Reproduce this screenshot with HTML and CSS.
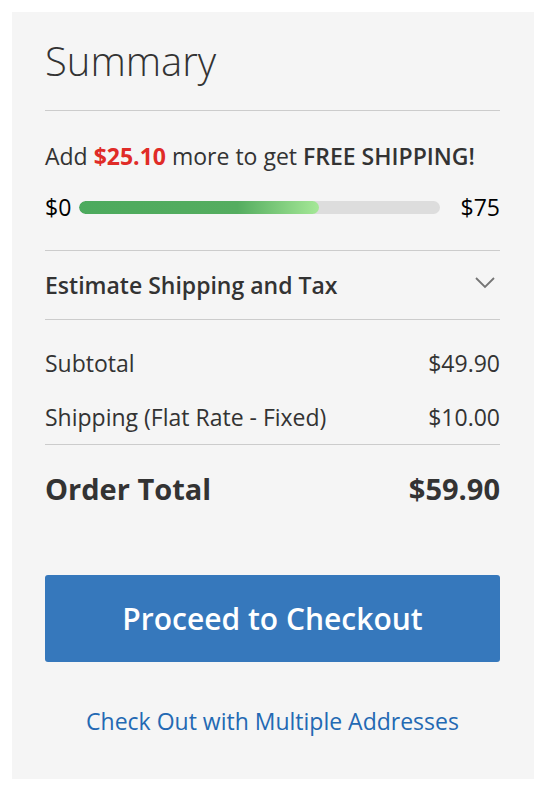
FILE: index.html
```html
<!DOCTYPE html>
<html lang="en">
  <head>
    <meta charset="UTF-8" />
    <meta name="viewport" content="width=device-width, initial-scale=1.0" />
    <title>Cart Summary</title>
    <link rel="stylesheet" href="styles.css">
  </head>
  <body>
    <div class="summary">
      <h2 class="summary-title">Summary</h2>

      <div class="free-shipping">
        <p class="free-shipping-text">
          Add <span class="amount-left">$25.10</span> more to get <strong>FREE SHIPPING!</strong>
        </p>
        <div class="progress-row">
          <span>$0</span>
          <div class="progress-track">
            <div class="progress-fill" style="width: 66.5%"></div>
          </div>
          <span>$75</span>
        </div>
      </div>

      <div class="estimate">
        <span>Estimate Shipping and Tax</span>
        <svg class="chevron" width="20" height="12" viewBox="0 0 20 12">
          <polyline points="1,1 10,10 19,1" fill="none" stroke="#757575" stroke-width="1.8" />
        </svg>
      </div>

      <div class="totals">
        <div class="totals-row">
          <span>Subtotal</span>
          <span>$49.90</span>
        </div>
        <div class="totals-row">
          <span>Shipping (Flat Rate - Fixed)</span>
          <span>$10.00</span>
        </div>
      </div>

      <div class="grand-total">
        <span>Order Total</span>
        <span>$59.90</span>
      </div>

      <button class="checkout-btn" type="button">Proceed to Checkout</button>

      <a class="multi-link" href="#">Check Out with Multiple Addresses</a>
    </div>
  </body>
</html>
```

FILE: styles.css
```css
body {
  margin: 0;
  padding: 12px;
  background-color: #ffffff;
  font-family: "Open Sans", "Liberation Sans", sans-serif;
  color: #333333;
}
.summary {
  width: 522px;
  box-sizing: border-box;
  background-color: #f5f5f5;
  padding: 20px 34px 43px 33px;
}
.summary-title {
  margin: 0;
  font-size: 40px;
  font-weight: 300;
  line-height: 57px;
  padding-bottom: 21px;
  border-bottom: 1px solid #cccccc;
}
.free-shipping {
  padding: 31px 0 29px;
  border-bottom: 1px solid #cccccc;
  font-size: 23px;
}
.free-shipping-text {
  margin: 0 0 23px;
  line-height: 28px;
}
.amount-left {
  color: #e02b27;
  font-weight: 700;
}
.free-shipping-text strong {
  font-weight: 600;
}
.progress-row {
  display: flex;
  align-items: center;
  line-height: 28px;
  color: #000000;
}
.progress-track {
  flex: 1;
  height: 13px;
  margin: 0 21px 0 8px;
  background-color: #dddddd;
  border-radius: 7px;
  overflow: hidden;
}
.progress-fill {
  height: 100%;
  border-radius: 7px;
  background: linear-gradient(to right, #4caa5d 0%, #55ad60 66%, #a5e897 100%);
}
.estimate {
  display: flex;
  align-items: center;
  justify-content: space-between;
  height: 68px;
  border-bottom: 1px solid #cccccc;
  font-size: 23px;
  font-weight: 600;
}
.chevron {
  margin-right: 5px;
  margin-top: -4px;
}
.totals {
  padding: 29px 0 13px;
  border-bottom: 1px solid #cccccc;
  font-size: 23px;
}
.totals-row {
  display: flex;
  justify-content: space-between;
  line-height: 28px;
}
.totals-row + .totals-row {
  margin-top: 26px;
}
.grand-total {
  display: flex;
  justify-content: space-between;
  padding-top: 25px;
  font-size: 29px;
  font-weight: 700;
  line-height: 38px;
}
.checkout-btn {
  display: block;
  width: 100%;
  height: 87px;
  margin-top: 67px;
  background-color: #3678bc;
  color: #ffffff;
  border: none;
  border-radius: 3px;
  font-family: inherit;
  font-size: 30px;
  font-weight: 600;
  cursor: pointer;
}
.multi-link {
  display: block;
  margin-top: 44px;
  text-align: center;
  font-size: 23px;
  line-height: 30px;
  color: #2369b3;
  text-decoration: none;
}
```
